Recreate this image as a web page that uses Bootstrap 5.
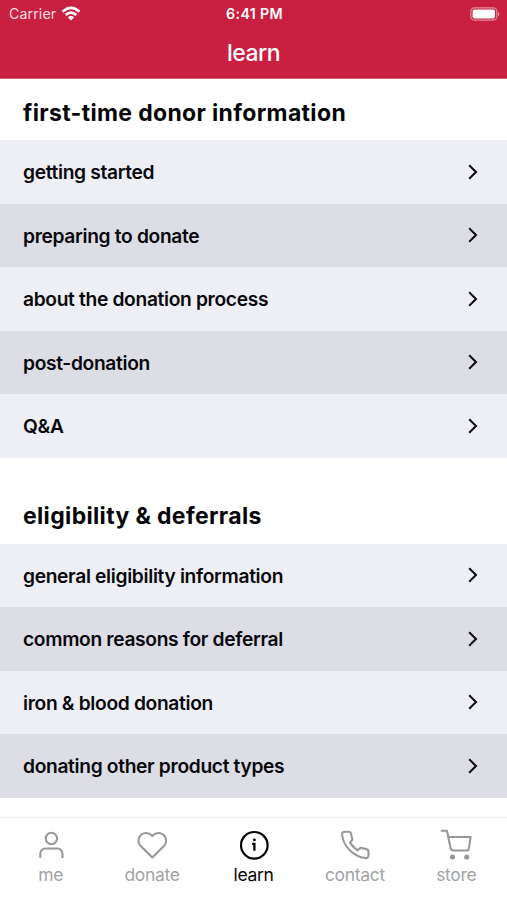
<!DOCTYPE html>
<html lang="en">
<head>
<meta charset="utf-8">
<meta name="viewport" content="width=device-width, initial-scale=1">
<title>learn</title>
<link href="https://cdn.jsdelivr.net/npm/bootstrap@5.3.0/dist/css/bootstrap.min.css" rel="stylesheet">
<style>
body { font-family: Inter, "Liberation Sans", sans-serif; color: #060608; background: #fff; height: 900px; overflow: hidden; }
.app-header { background: #c92041; height: 79px; border-bottom: 1px solid #d8637a; }
.status-bar { height: 27px; padding: 0 7px 0 9px; font-size: 14.2px; line-height: 27px; }
.status-bar .carrier { color: #fbdde2; letter-spacing: .1px; }
.status-bar .clock { font-weight: 600; font-size: 14.2px; letter-spacing: .35px; }
.screen-title { font-size: 23px; font-weight: 500; line-height: 53px; letter-spacing: -.5px; }
.section-title { font-size: 23px; font-weight: 700; line-height: 28px; letter-spacing: .34px; padding: 20px 23px 13px; margin: 0; }
.section-title.later { padding-top: 44px; padding-bottom: 14px; }
.topics { --bs-list-group-bg: #eeeff5; --bs-list-group-color: #08080c; }
.topics .list-group-item { height: 63.5px; padding: 0 28px 0 23px; border: 0; font-size: 19.2px; font-weight: 600; letter-spacing: -.33px; }
.topics .list-group-item span { padding-top: 2px; }
.topics .list-group-item:nth-child(even) { background: #dddde6; }
.tabs { height: 83px; border-top: 1px solid #ebebed; background: #fff; }
.tabs .nav-link { color: #a3a3a6; padding: 11px 0 0; font-size: 17.5px; line-height: 28px; letter-spacing: -.3px; }
.tabs .nav-link svg { color: #98989b; }
.tabs .nav-link.active, .tabs .nav-link.active svg { color: #050505; }
</style>
</head>
<body class="d-flex flex-column">
<header class="app-header text-white flex-shrink-0">
  <div class="status-bar row g-0 align-items-center">
    <div class="col d-flex align-items-center carrier">Carrier
      <svg class="ms-1" width="22" height="16" viewBox="0 0 22 16" fill="none" stroke="#fff" stroke-width="2.7"><path d="M2.6 5.7Q11-2 19.4 5.7M5.7 9Q11 4.2 16.3 9"/><path d="M7.8 11.2Q11 8.6 14.2 11.2L11 14.5Z" fill="#fff" stroke="none"/></svg>
    </div>
    <div class="col-auto clock">6:41 PM</div>
    <div class="col d-flex justify-content-end">
      <svg width="30" height="14" viewBox="0 0 30 14"><rect x=".8" y=".8" width="26" height="12.4" rx="3.6" fill="none" stroke="#e68c9d" stroke-width="1.2"/><rect x="2.6" y="2.6" width="22.4" height="8.8" rx="1.8" fill="#fff"/><path d="M28 4.7q2.8 2.3 0 4.6z" fill="#e68c9d"/></svg>
    </div>
  </div>
  <h1 class="screen-title text-center m-0">learn</h1>
</header>
<main class="flex-grow-1 overflow-hidden">
  <h2 class="section-title"><span>first-time donor information</span></h2>
  <div class="topics list-group list-group-flush">
    <a class="list-group-item d-flex align-items-center justify-content-between" href="#"><span>getting started</span><svg width="12" height="18" viewBox="0 0 12 18" fill="none" stroke="#08080c" stroke-width="2"><path d="M2.2 2.3 9 9l-6.8 6.7"/></svg></a>
    <a class="list-group-item d-flex align-items-center justify-content-between" href="#"><span>preparing to donate</span><svg width="12" height="18" viewBox="0 0 12 18" fill="none" stroke="#08080c" stroke-width="2"><path d="M2.2 2.3 9 9l-6.8 6.7"/></svg></a>
    <a class="list-group-item d-flex align-items-center justify-content-between" href="#"><span>about the donation process</span><svg width="12" height="18" viewBox="0 0 12 18" fill="none" stroke="#08080c" stroke-width="2"><path d="M2.2 2.3 9 9l-6.8 6.7"/></svg></a>
    <a class="list-group-item d-flex align-items-center justify-content-between" href="#"><span>post-donation</span><svg width="12" height="18" viewBox="0 0 12 18" fill="none" stroke="#08080c" stroke-width="2"><path d="M2.2 2.3 9 9l-6.8 6.7"/></svg></a>
    <a class="list-group-item d-flex align-items-center justify-content-between" href="#"><span>Q&amp;A</span><svg width="12" height="18" viewBox="0 0 12 18" fill="none" stroke="#08080c" stroke-width="2"><path d="M2.2 2.3 9 9l-6.8 6.7"/></svg></a>
  </div>
  <h2 class="section-title later"><span>eligibility &amp; deferrals</span></h2>
  <div class="topics list-group list-group-flush">
    <a class="list-group-item d-flex align-items-center justify-content-between" href="#"><span>general eligibility information</span><svg width="12" height="18" viewBox="0 0 12 18" fill="none" stroke="#08080c" stroke-width="2"><path d="M2.2 2.3 9 9l-6.8 6.7"/></svg></a>
    <a class="list-group-item d-flex align-items-center justify-content-between" href="#"><span>common reasons for deferral</span><svg width="12" height="18" viewBox="0 0 12 18" fill="none" stroke="#08080c" stroke-width="2"><path d="M2.2 2.3 9 9l-6.8 6.7"/></svg></a>
    <a class="list-group-item d-flex align-items-center justify-content-between" href="#"><span>iron &amp; blood donation</span><svg width="12" height="18" viewBox="0 0 12 18" fill="none" stroke="#08080c" stroke-width="2"><path d="M2.2 2.3 9 9l-6.8 6.7"/></svg></a>
    <a class="list-group-item d-flex align-items-center justify-content-between" href="#"><span>donating other product types</span><svg width="12" height="18" viewBox="0 0 12 18" fill="none" stroke="#08080c" stroke-width="2"><path d="M2.2 2.3 9 9l-6.8 6.7"/></svg></a>
  </div>
</main>
<nav class="tabs nav nav-justified flex-nowrap flex-shrink-0">
  <a class="nav-link d-flex flex-column align-items-center col" href="#"><svg width="32" height="32" viewBox="0 0 32 32" fill="none" stroke="currentColor" stroke-width="2.1"><circle cx="16.4" cy="9.5" r="5.7"/><path d="M5.3 29v-4.3a5.2 5.2 0 0 1 5.2-5.2h11.8a5.2 5.2 0 0 1 5.2 5.2V29"/></svg><span>me</span></a>
  <a class="nav-link d-flex flex-column align-items-center col" href="#"><svg width="32" height="32" viewBox="0 0 32 32" fill="none" stroke="currentColor" stroke-width="2.1" stroke-linejoin="round"><path d="M16.3 28.4 4.2 16.4a7.6 7.6 0 0 1 10.7-10.7l1.4 1.4 1.4-1.4a7.6 7.6 0 0 1 10.7 10.7Z"/></svg><span>donate</span></a>
  <a class="nav-link active d-flex flex-column align-items-center col" href="#"><svg width="32" height="32" viewBox="0 0 32 32" fill="none" stroke="currentColor" stroke-width="2.2"><circle cx="16.3" cy="16.3" r="13.3"/><path d="M14.1 14.8h2.3v7" stroke-width="2.3"/><circle cx="16.4" cy="10.9" r="1.4" fill="currentColor" stroke="none"/></svg><span>learn</span></a>
  <a class="nav-link d-flex flex-column align-items-center col" href="#"><svg width="32" height="32" viewBox="0 0 32 32" fill="none" stroke="currentColor" stroke-width="2.1" stroke-linejoin="round"><path d="M29.5 22.6v3.9a2.6 2.6 0 0 1-2.9 2.6C14.5 27.8 4.3 17.5 3 5.5A2.6 2.6 0 0 1 5.6 2.7H9.5A2.6 2.6 0 0 1 12.1 4.9Q12.4 7.3 13.1 9.1A2.6 2.6 0 0 1 12.5 11.8L10.9 13.4Q13.8 18.4 18.8 21.3L20.4 19.7A2.6 2.6 0 0 1 23.1 19.1Q25 19.8 27.3 20.1A2.6 2.6 0 0 1 29.5 22.6Z"/></svg><span>contact</span></a>
  <a class="nav-link d-flex flex-column align-items-center col" href="#"><svg width="32" height="32" viewBox="0 0 32 32" fill="none" stroke="currentColor" stroke-width="2.1" stroke-linejoin="round"><path d="M.8 1.7H6.9L10.7 19.6A2.5 2.5 0 0 0 13.1 21.5H26.4A2.5 2.5 0 0 0 28.9 19.5L30.6 8H8.2"/><circle cx="12.5" cy="28" r="2.6" fill="currentColor" stroke="none"/><circle cx="26.7" cy="28" r="2.6" fill="currentColor" stroke="none"/></svg><span>store</span></a>
</nav>
<script src="https://cdn.jsdelivr.net/npm/bootstrap@5.3.0/dist/js/bootstrap.bundle.min.js"></script>
</body>
</html>
